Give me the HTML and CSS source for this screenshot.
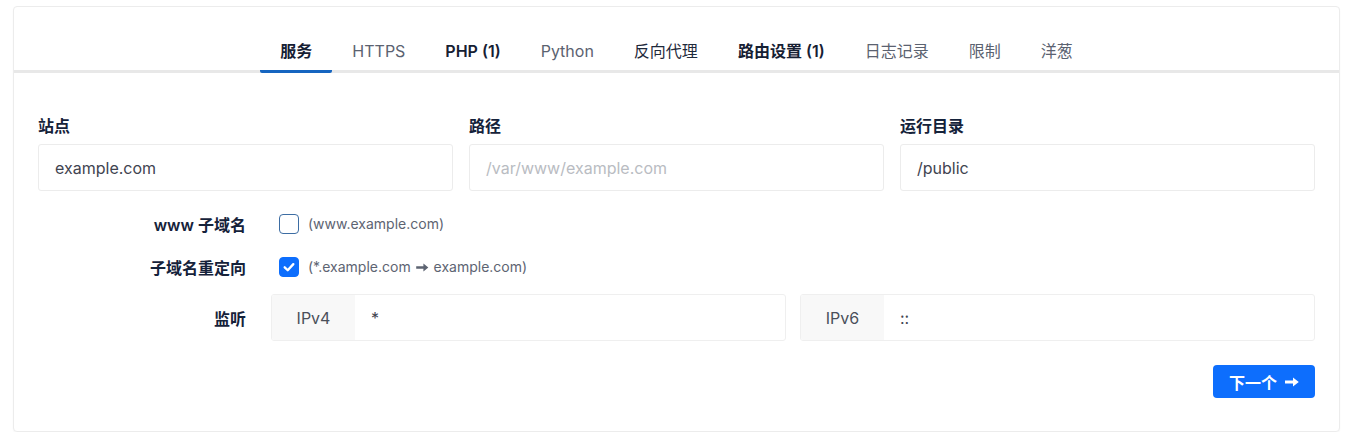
FILE: index.html
```html
<!DOCTYPE html>
<html lang="zh-CN">
<head>
<meta charset="utf-8">
<title>站点设置</title>
<link rel="stylesheet" href="styles.css">
</head>
<body>
<div class="card">
  <nav class="tabs">
    <a class="tab active">服务</a>
    <a class="tab muted">HTTPS</a>
    <a class="tab strong">PHP (1)</a>
    <a class="tab muted">Python</a>
    <a class="tab">反向代理</a>
    <a class="tab strong">路由设置 (1)</a>
    <a class="tab muted">日志记录</a>
    <a class="tab muted">限制</a>
    <a class="tab muted">洋葱</a>
  </nav>
  <div class="body">
    <div class="cols">
      <div class="field">
        <label class="label">站点</label>
        <div class="input">example.com</div>
      </div>
      <div class="field">
        <label class="label">路径</label>
        <div class="input placeholder">/var/www/example.com</div>
      </div>
      <div class="field">
        <label class="label">运行目录</label>
        <div class="input">/public</div>
      </div>
    </div>
    <div class="rows">
      <div class="row">
        <div class="rlabel">www 子域名</div>
        <div class="rcontent check">
          <span class="box"></span>
          <span class="hint">(www.example.com)</span>
        </div>
      </div>
      <div class="row">
        <div class="rlabel">子域名重定向</div>
        <div class="rcontent check">
          <span class="box checked"><svg viewBox="0 0 20 20" width="20" height="20"><path d="M5.2 10.4 L8.6 13.6 L14.8 6.8" fill="none" stroke="#fff" stroke-width="2.6" stroke-linecap="round" stroke-linejoin="round"/></svg></span>
          <span class="hint">(*.example.com <svg class="arr" viewBox="0 0 14 10" width="13" height="9"><path d="M0 3.6 H8 V0.6 L13.5 5 L8 9.4 V6.4 H0 Z" fill="currentColor"/></svg> example.com)</span>
        </div>
      </div>
      <div class="row listen">
        <div class="rlabel">监听</div>
        <div class="rcontent groups">
          <div class="group"><span class="addon">IPv4</span><span class="gval">*</span></div>
          <div class="group"><span class="addon">IPv6</span><span class="gval">::</span></div>
        </div>
      </div>
    </div>
    <div class="actions">
      <button class="btn">下一个 <svg class="barr" viewBox="0 0 14 10" width="14" height="10"><path d="M0 3.5 H8 V0.5 L13.8 5 L8 9.5 V6.5 H0 Z" fill="#fff"/></svg></button>
    </div>
  </div>
</div>
</body>
</html>
```

FILE: styles.css
```css
* { box-sizing: border-box; }
html, body { background: #ffffff; }
body {
  margin: 0;
  padding: 6px 10px 0 13px;
  font-family: Inter, "Noto Sans CJK SC", "DejaVu Sans", sans-serif;
  color: #1c2639;
}
.card {
  border: 1px solid #ececec;
  border-radius: 4px;
  height: 426px;
  background: #fff;
  box-shadow: 0 1px 2px rgba(0,0,0,0.03);
}
.tabs {
  display: flex;
  justify-content: center;
  padding-top: 22px;
  border-bottom: 3px solid #e8e8e8;
}
.tab {
  display: block;
  padding: 11px 20px 8px;
  margin-bottom: -3px;
  border-bottom: 3px solid transparent;
  font-size: 16px;
  line-height: 22px;
  color: #1f2a3c;
}
.tab.muted { color: #5b6270; }
.tab.strong { font-weight: 600; color: #162033; }
.tab.active {
  font-weight: 600;
  color: #162033;
  border-bottom-color: #1565c0;
  border-radius: 2px;
}
.body {
  padding: 42px 24px 0;
}
.cols {
  display: grid;
  grid-template-columns: 1fr 1fr 1fr;
  gap: 16px;
}
.label {
  display: block;
  font-size: 16px;
  font-weight: 700;
  line-height: 22px;
  color: #15223a;
  margin-bottom: 7px;
}
.input {
  height: 47px;
  border: 1px solid #ececec;
  border-radius: 3px;
  padding: 0 16px;
  display: flex;
  align-items: center;
  font-size: 16px;
  color: #3f4450;
}
.input.placeholder { color: #b9bcc2; }
.rows {
  margin-top: 11px;
  display: flex;
  flex-direction: column;
}
.row {
  display: flex;
  align-items: center;
  height: 43px;
}
.row.listen {
  height: 47px;
  margin-top: 6px;
}
.rlabel {
  width: 233px;
  padding-right: 25px;
  text-align: right;
  font-size: 16px;
  font-weight: 600;
  color: #15223a;
}
.rcontent { flex: 1; }
.check {
  display: flex;
  align-items: center;
  padding-left: 8px;
}
.box {
  width: 20px;
  height: 20px;
  border: 1px solid #3d6da3;
  border-radius: 4px;
  margin-right: 9px;
  display: flex;
  align-items: center;
  justify-content: center;
}
.box.checked {
  background: #0d6efd;
  border-color: #0d6efd;
}
.box svg { display: block; }
.hint {
  font-size: 14px;
  color: #5d6472;
}
.arr { vertical-align: 0; margin: 0 1px; }
.groups {
  display: grid;
  grid-template-columns: 1fr 1fr;
  gap: 14px;
}
.group {
  display: flex;
  height: 47px;
  border: 1px solid #efefef;
  border-radius: 3px;
  overflow: hidden;
}
.addon {
  width: 83px;
  background: #f8f8f8;
  display: flex;
  align-items: center;
  justify-content: center;
  font-size: 16px;
  color: #4a4f5a;
}
.gval {
  display: flex;
  align-items: center;
  padding-left: 16px;
  font-size: 16px;
  color: #3f4450;
}
.actions {
  display: flex;
  justify-content: flex-end;
  margin-top: 24px;
}
.btn {
  width: 102px;
  height: 33px;
  border: none;
  border-radius: 4px;
  background: #0d6efd;
  color: #fff;
  font-family: Inter, "Noto Sans CJK SC", sans-serif;
  font-size: 16px;
  font-weight: 700;
  display: flex;
  align-items: center;
  justify-content: center;
  gap: 8px;
  padding: 0;
}
.barr { display: block; }
```
